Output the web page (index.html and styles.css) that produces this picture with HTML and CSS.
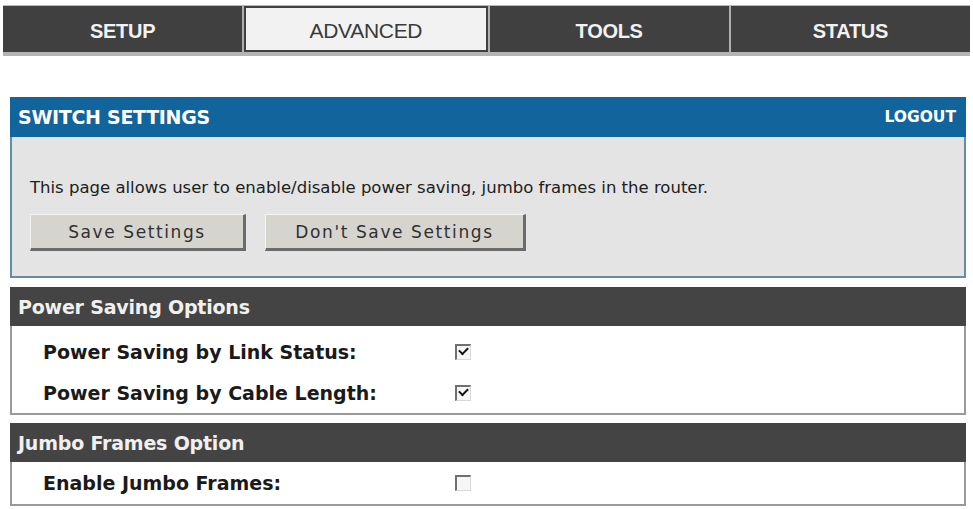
FILE: index.html
```html
<!DOCTYPE html>
<html>
<head>
<meta charset="utf-8">
<link rel="stylesheet" href="styles.css">
</head>
<body>
<div class="nav">
  <div class="tab">SETUP</div>
  <div class="tab active">ADVANCED</div>
  <div class="tab">TOOLS</div>
  <div class="tab">STATUS</div>
</div>
<div class="content">
  <div class="panel">
    <div class="panel-head">
      <span class="panel-title">SWITCH SETTINGS</span>
      <span class="logout">LOGOUT</span>
    </div>
    <div class="panel-body">
      <p class="desc">This page allows user to enable/disable power saving, jumbo frames in the router.</p>
      <div class="buttons">
        <button class="btn btn-save">Save Settings</button>
        <button class="btn btn-dont">Don't Save Settings</button>
      </div>
    </div>
  </div>

  <div class="section">
    <div class="section-head">Power Saving Options</div>
    <div class="section-body power">
      <div class="row"><span class="label">Power Saving by Link Status:</span><span class="cb checked"></span></div>
      <div class="row"><span class="label">Power Saving by Cable Length:</span><span class="cb checked"></span></div>
    </div>
  </div>

  <div class="section">
    <div class="section-head">Jumbo Frames Option</div>
    <div class="section-body jumbo">
      <div class="row"><span class="label">Enable Jumbo Frames:</span><span class="cb"></span></div>
    </div>
  </div>
</div>
</body>
</html>
```
FILE: styles.css
```css
html, body {
  margin: 0;
  padding: 0;
  background: #ffffff;
}
body {
  font-family: "DejaVu Sans", Verdana, sans-serif;
  color: #1a1a1a;
}
.nav {
  display: flex;
  margin: 5px 3px 0 3px;
  width: 967px;
  background: #b0b0b0;
  border-top: 1px solid #b8b8b8;
  border-bottom: 4px solid #b4b4b4;
  gap: 2px;
}
.tab {
  flex: 1;
  height: 42px;
  padding-top: 4px;
  background: #404040;
  color: #f2f2f2;
  font-family: "Liberation Sans", Arial, sans-serif;
  font-weight: bold;
  font-size: 20px;
  letter-spacing: -0.3px;
  display: flex;
  align-items: center;
  justify-content: center;
}
.tab.active {
  background: #f2f2f2;
  color: #3a3a3a;
  font-weight: normal;
  border: 2px solid #404040;
  height: 38px;
  font-size: 21px;
}
.content {
  margin: 0 7px 0 10px;
  padding-top: 41px;
}
.panel {
  border: 2px solid #5f8ea8;
  border-top: none;
  background: #e4e4e4;
}
.panel-head {
  height: 40px;
  margin: 0 -2px;
  background: #11659c;
  display: flex;
  align-items: center;
  justify-content: space-between;
  padding: 0 10px 0 8px;
  color: #ffffff;
  font-weight: bold;
}
.panel-title {
  font-size: 19px;
  letter-spacing: -0.3px;
}
.logout {
  font-size: 15.5px;
}
.panel-body {
  padding: 41px 0 25px 18px;
}
.desc {
  margin: 0 0 17px 0;
  height: 19px;
  line-height: 19px;
  font-family: "DejaVu Sans", Tahoma, sans-serif;
  font-size: 16.5px;
  color: #202020;
}
.buttons {
  display: flex;
  gap: 19px;
}
.btn {
  height: 37px;
  background: #d6d4cf;
  border: none;
  border-top: 1px solid #f4f4f4;
  border-left: 1px solid #f4f4f4;
  border-right: 3px solid #6b6b6b;
  border-bottom: 3px solid #6b6b6b;
  font-family: "DejaVu Sans", Tahoma, sans-serif;
  font-size: 17px;
  letter-spacing: 1.6px;
  color: #303030;
  padding: 0;
}
.btn-save { width: 216px; }
.btn-dont { width: 261px; }
.section {
  margin-top: 9px;
  border: 2px solid #9a9a9a;
  border-top: none;
}
.section + .section {
  margin-top: 8px;
}
.section-head {
  margin: 0 -2px;
  height: 39px;
  background: #444444;
  color: #f0f0f0;
  font-weight: bold;
  font-size: 19px;
  letter-spacing: -0.2px;
  display: flex;
  align-items: center;
  padding-left: 8px;
}
.section-body {
  padding-left: 31px;
  background: #ffffff;
}
.section-body.power {
  padding-top: 5px;
}
.section-body.jumbo {
  padding-bottom: 1px;
}
.row {
  height: 41px;
  display: flex;
  align-items: center;
}
.label {
  width: 412px;
  font-weight: bold;
  font-size: 19px;
  color: #1a1a1a;
}
.cb {
  width: 13px;
  height: 13px;
  border-top: 2px solid #707070;
  border-left: 2px solid #707070;
  border-right: 1px solid #d8d8d8;
  border-bottom: 1px solid #d8d8d8;
  background: #f6f6f6;
  position: relative;
}
.cb.checked::after {
  content: "";
  position: absolute;
  left: 2px;
  top: 1px;
  width: 7px;
  height: 4px;
  border-left: 2.5px solid #111;
  border-bottom: 2.5px solid #111;
  transform: rotate(-45deg);
}
```
